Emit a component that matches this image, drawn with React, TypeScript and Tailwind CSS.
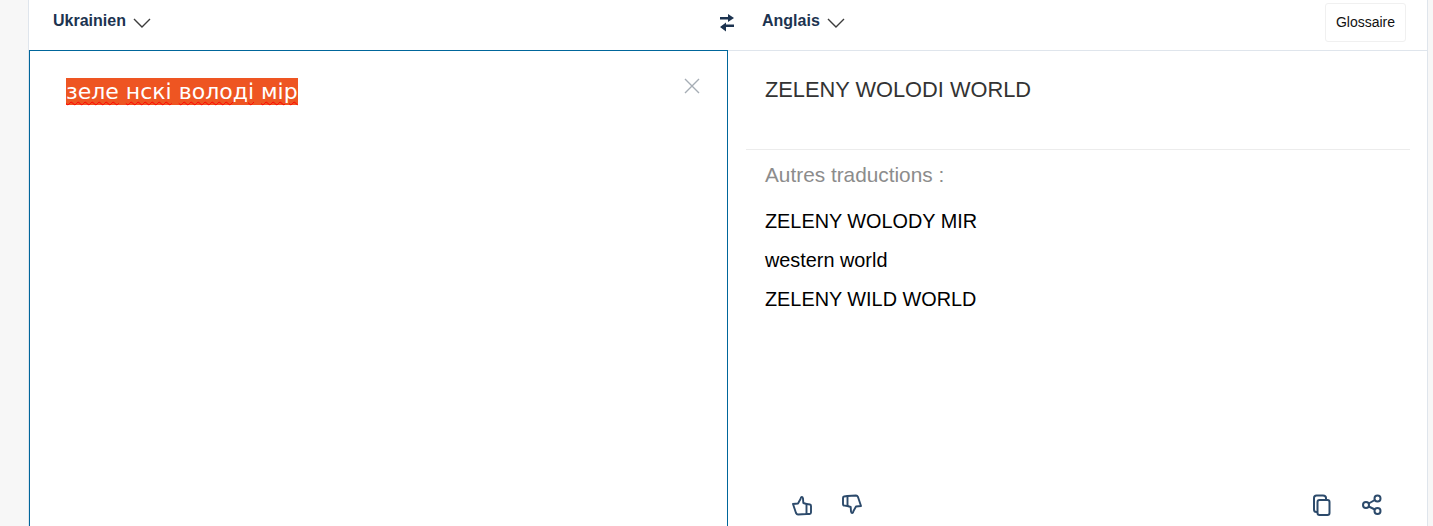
const ALTERNATIVES = ['ZELENY WOLODY MIR', 'western world', 'ZELENY WILD WORLD'];
const SOURCE_WORDS = ['зеле', 'нскі', 'володі', 'мір'];

function Chevron() {
  return (
    <svg width="18" height="10" viewBox="0 0 18 10" fill="none" stroke="#3c3c3c" strokeWidth="1.4" className="ml-[7px] mt-[3px]">
      <path d="M1 1 L9 9 L17 1" />
    </svg>
  );
}

function Swap() {
  return (
    <svg width="16" height="18" viewBox="0 0 16 18" fill="#1c3350" className="ml-auto mr-[-8px] mt-[4px]">
      <path d="M1 3 H9 V0 L15 4 L9 8 V5.4 H1 Z" />
      <path d="M15 10.6 H7 V8.6 L1 13 L7 17.6 V13 H15 Z" />
    </svg>
  );
}

function ThumbUp() {
  return (
    <svg width="22" height="22" viewBox="0 0 22 22" fill="none" stroke="#2c4a6b" strokeWidth="1.9" strokeLinejoin="round" strokeLinecap="round">
      <path d="M2 10 L7 9.5 L9.5 5 C10 2.5 11.5 2.5 12 4.5 L12.3 9 L15.5 10 L15.5 20 L7 20.5 C6 20.5 5.5 20 5 19 Z" />
      <path d="M15.5 10 L19 10.5 C19.8 10.6 20 11 20 12 L20 18.5 C20 19.5 19.5 20 18.5 20 L15.5 20" />
    </svg>
  );
}

function ThumbDown() {
  return (
    <svg width="22" height="22" viewBox="0 0 22 22" fill="none" stroke="#2c4a6b" strokeWidth="1.9" strokeLinejoin="round" strokeLinecap="round">
      <path d="M20 12 L15 12.5 L12.5 17 C12 19.5 10.5 19.5 10 17.5 L9.7 13 L6.5 12 L6.5 2 L15 1.5 C16 1.5 16.5 2 17 3 Z" />
      <path d="M6.5 2 L3 2.5 C2.2 2.6 2 3 2 4 L2 10 C2 11 2.5 11.6 3.5 11.6 L6.5 12" />
    </svg>
  );
}

function Copy() {
  return (
    <svg width="22" height="22" viewBox="0 0 22 22" fill="none" stroke="#2c4a6b" strokeWidth="2" strokeLinejoin="round">
      <rect x="6.5" y="6" width="12" height="15" rx="2" />
      <path d="M6.5 18 H5.5 C4 18 3 17 3 15.5 V4 C3 2.5 4 1.5 5.5 1.5 H12 C13.5 1.5 15 2.5 15 4 V6" />
    </svg>
  );
}

function Share() {
  return (
    <svg width="22" height="22" viewBox="0 0 22 22" fill="none" stroke="#2c4a6b" strokeWidth="2">
      <circle cx="16.5" cy="4.5" r="3" />
      <circle cx="16.5" cy="17" r="3" />
      <circle cx="5" cy="11" r="3" />
      <path d="M7.7 9.5 L13.8 6 M7.7 12.5 L13.8 15.5" />
    </svg>
  );
}

export default function App() {
  return (
    <div className="h-[526px] overflow-hidden bg-[#f7f7f7] pl-[28px] pr-[5px] font-['Liberation_Sans',sans-serif]">
      <div className="h-full bg-white border-x border-[#dfe5ec]">
        {/* Language bar */}
        <div className="flex h-[50px] pb-[8px]">
          <div className="w-[699px] flex items-center pl-[24px] pr-[1px]">
            <span className="text-[16px] font-bold text-[#1c3350]">Ukrainien</span>
            <Chevron />
            <Swap />
          </div>
          <div className="flex-1 flex items-center pl-[34px] pr-[21px]">
            <span className="text-[16px] font-bold text-[#1c3350]">Anglais</span>
            <Chevron />
            <button className="ml-auto h-[39px] w-[81px] mt-[3px] rounded-[3px] border border-[#f0f0f0] text-[14px] text-[#111]">
              Glossaire
            </button>
          </div>
        </div>

        <div className="flex h-[476px] border-t border-[#dfe5ec]">
          {/* Source panel */}
          <div className="relative w-[699px] h-[490px] -mt-px border border-[#00669b] pl-[36px] pt-[27px]">
            <span className="bg-[#ee5522] text-white text-[22px] leading-[27px] inline-block font-['DejaVu_Sans',sans-serif]">
              {SOURCE_WORDS.map((word, i) => (
                <span key={word}>
                  {i > 0 && ' '}
                  <span className="underline decoration-wavy decoration-[#ff0000] decoration-1 underline-offset-2">{word}</span>
                </span>
              ))}
            </span>
            <svg width="16" height="16" viewBox="0 0 16 16" fill="none" stroke="#a6adb5" strokeWidth="1.4" className="absolute top-[27px] right-[27px]">
              <path d="M1 1 L15 15 M15 1 L1 15" />
            </svg>
          </div>

          {/* Result panel */}
          <div className="flex-1 flex flex-col pl-[18px] pr-[17px]">
            <div className="h-[99px] border-b border-[#ececec] pl-[19px] pt-[25px]">
              <p className="text-[21.8px] leading-[28px] text-[#333]">ZELENY WOLODI WORLD</p>
            </div>
            <div className="flex-1 pl-[19px] pt-[13px]">
              <p className="text-[20.8px] leading-[24px] text-[#8c8c8c]">Autres traductions :</p>
              <ul className="mt-[21px] flex flex-col gap-[12px]">
                {ALTERNATIVES.map((alt) => (
                  <li key={alt} className="text-[19.85px] leading-[27px] text-black">{alt}</li>
                ))}
              </ul>
            </div>
            <div className="flex items-center h-[44px] pl-[45px] pr-[27px] pt-[2px]">
              <div className="flex gap-[28px]"><ThumbUp /><ThumbDown /></div>
              <div className="flex gap-[28px] ml-auto"><Copy /><Share /></div>
            </div>
          </div>
        </div>
      </div>
    </div>
  );
}
